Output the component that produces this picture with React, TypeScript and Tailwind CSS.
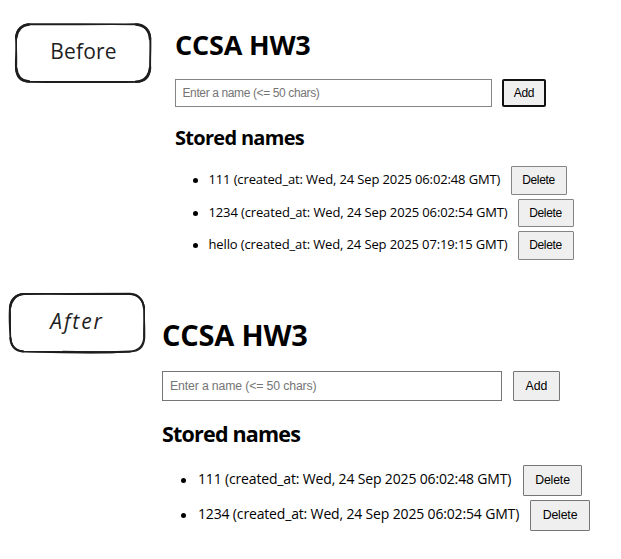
const ui = "font-['Open_Sans','Noto_Sans',sans-serif] whitespace-nowrap text-black";
const control = "font-['Liberation_Sans',Arial,sans-serif] whitespace-nowrap";

function BeforeLabel() {
  return (
    <div className="relative ml-[14px] mt-[22px] flex h-[62px] w-[138px] shrink-0 items-center justify-center">
      <svg className="absolute inset-0" width="138" height="62" viewBox="0 0 138 62" fill="none" stroke="#1e1e1e" strokeLinecap="round" strokeLinejoin="round">
        <path d="M16 2 C50 1.600 90 2.600 122 2 C131 2 136 8 136.500 16 C137 26 136 36 136.400 46 C136 55 131 60 122 60 C90 60.500 50 60.300 16 60 C7 60 2 55 1.800 46 C1.200 36 3 26 1.800 16 C2 8 7 2 16 2Z" strokeWidth="1.5" />
        <path d="M16 2.600 C50 3 90 2 122 2.600 C130 3 135.500 9 136 17 C136.400 27 136 37 135.800 46 C135 54 130 59 122 59.600 C90 60 50 59.600 16 59.500 C8 59 3 54 2.400 46 C3 36 2 26 2.400 16 C3 9 8 3 16 2.600Z" strokeWidth="1.3" />
        <path d="M122 2.400 C130 3 135.500 8 136 17 M136 46 C135 54 130 59.500 122 59.800 M15 59.500 C7 59 3 54 2.200 46 M2.200 16 C3 8 8 3 15 2.400" strokeWidth="2.5" />
      </svg>
      <span className="relative ml-[1px] mt-[-3px] font-['Open_Sans','Noto_Sans',sans-serif] text-[21px] leading-none tracking-[0.2px] text-[#1e1e1e]">Before</span>
    </div>
  );
}

function AfterLabel() {
  return (
    <div className="relative ml-[8px] mt-[12px] flex h-[62px] w-[138px] shrink-0 items-center justify-center">
      <svg className="absolute inset-0" width="138" height="62" viewBox="0 0 138 62" fill="none" stroke="#1e1e1e" strokeLinecap="round" strokeLinejoin="round">
        <path d="M16 1.800 C50 2 90 1.400 122 1.600 C131 2 135.500 8 136 16 C136 26 136.800 36 136.500 46 C136 55 131 59.500 122 59.700 C90 61.500 60 60.300 16 59.700 C7 59 3 54 2.400 46 C1.600 36 1 26 1.700 16 C2 8 7 2 16 1.800Z" strokeWidth="1.5" />
        <path d="M16 2.300 C50 2 90 2.600 122 2.200 C130 3 135 8 136.200 17 C136.600 27 135.400 37 135.800 46 C135 54 130 58.500 122 59.300 C90 60.500 60 59.600 16 59.300 C8 58.500 3 54 2.600 46 C2 36 2.600 26 2.200 16 C3 9 8 3 16 2.300Z" strokeWidth="1.3" />
        <path d="M122 2 C130 2.500 135 8 136 16 M122 59.500 Q87 61 55 59.900 M15 59.500 C7 59 3 54 2.400 46 M2 16 C3 8 8 2.500 15 2" strokeWidth="2.2" />
      </svg>
      <span className="relative mt-[-3px] font-['Open_Sans','Noto_Sans',sans-serif] text-[21px] italic leading-none tracking-[1.900px] text-[#1e1e1e]">After</span>
    </div>
  );
}

function BeforeItem({ name, time, wide }: { name: string; time: string; wide?: boolean }) {
  return (
    <li className="flex h-[28.500px] items-center">
      <span className="mr-[11px] mt-[1px] size-[5px] rounded-full bg-black" />
      <span className={`${ui} mt-[-1px] text-[13px] leading-none tracking-[-0.13px] ${wide ? "w-[309px]" : "w-[302px]"}`}>
        {name} (created_at: Wed, 24 Sep 2025 {time} GMT)
      </span>
      <button className={`${control} h-full w-[56px] rounded-[1px] border border-[#858585] bg-[#efefef] text-[12px] leading-none tracking-[-0.35px] text-black`}>Delete</button>
    </li>
  );
}

function AfterItem({ name, time, wide }: { name: string; time: string; wide?: boolean }) {
  return (
    <li className="flex h-[30.500px] items-center">
      <span className="mr-[12px] size-[5px] rounded-full bg-black" />
      <span className={`${ui} mt-[-2px] text-[14px] leading-none tracking-[-0.16px] ${wide ? "w-[332px]" : "w-[325px]"}`}>
        {name} (created_at: Wed, 24 Sep 2025 {time} GMT)
      </span>
      <button className={`${control} h-full rounded-[1px] border border-[#767676] bg-[#efefef] text-[12.3px] leading-none tracking-[-0.15px] text-black ${wide ? "w-[60px]" : "w-[59px]"}`}>Delete</button>
    </li>
  );
}

export default function App() {
  return (
    <main className="h-[559px] w-[621px] overflow-hidden bg-white">
      <section className="flex h-[280px]">
        <BeforeLabel />
        <div className="ml-[23px] pt-[30px]">
          <h1 className={`${ui} h-[49px] text-[27px] font-bold leading-[30px] tracking-[-0.2px]`}>CCSA HW3</h1>
          <div className="flex h-[28px] gap-[10px]">
            <input className={`${control} h-full w-[317px] border border-[#858585] px-[6.500px] pb-[1px] text-[12px] tracking-[-0.38px] placeholder:text-[#757575]`} placeholder="Enter a name (<= 50 chars)" />
            <button className={`${control} h-full w-[44px] rounded-[2px] border-2 border-[#101010] bg-[#efefef] text-[12px] leading-none tracking-[-0.35px] text-black`}>Add</button>
          </div>
          <h2 className={`${ui} mt-[19px] h-[40px] text-[20px] font-bold leading-[24px] tracking-[-0.7px]`}>Stored names</h2>
          <ul className="ml-[17.500px] flex flex-col gap-[4px]">
            <BeforeItem name="111" time="06:02:48" />
            <BeforeItem name="1234" time="06:02:54" wide />
            <BeforeItem name="hello" time="07:19:15" wide />
          </ul>
        </div>
      </section>
      <section className="flex h-[279px]">
        <AfterLabel />
        <div className="ml-[16px] pt-[40px]">
          <h1 className={`${ui} h-[51px] text-[29px] font-bold leading-[30px] tracking-[-0.2px]`}>CCSA HW3</h1>
          <div className="flex h-[30px] gap-[11px]">
            <input className={`${control} h-full w-[340px] border border-[#767676] px-[7px] pb-[1px] text-[12.3px] tracking-[-0.15px] placeholder:text-[#757575]`} placeholder="Enter a name (<= 50 chars)" />
            <button className={`${control} h-full w-[47px] rounded-[1px] border border-[#767676] bg-[#efefef] text-[12.3px] leading-none text-black`}>Add</button>
          </div>
          <h2 className={`${ui} mt-[21px] h-[43px] text-[21.500px] font-bold leading-[24px] tracking-[-0.8px]`}>Stored names</h2>
          <ul className="ml-[19px] flex flex-col gap-[4.500px]">
            <AfterItem name="111" time="06:02:48" />
            <AfterItem name="1234" time="06:02:54" wide />
          </ul>
        </div>
      </section>
    </main>
  );
}
